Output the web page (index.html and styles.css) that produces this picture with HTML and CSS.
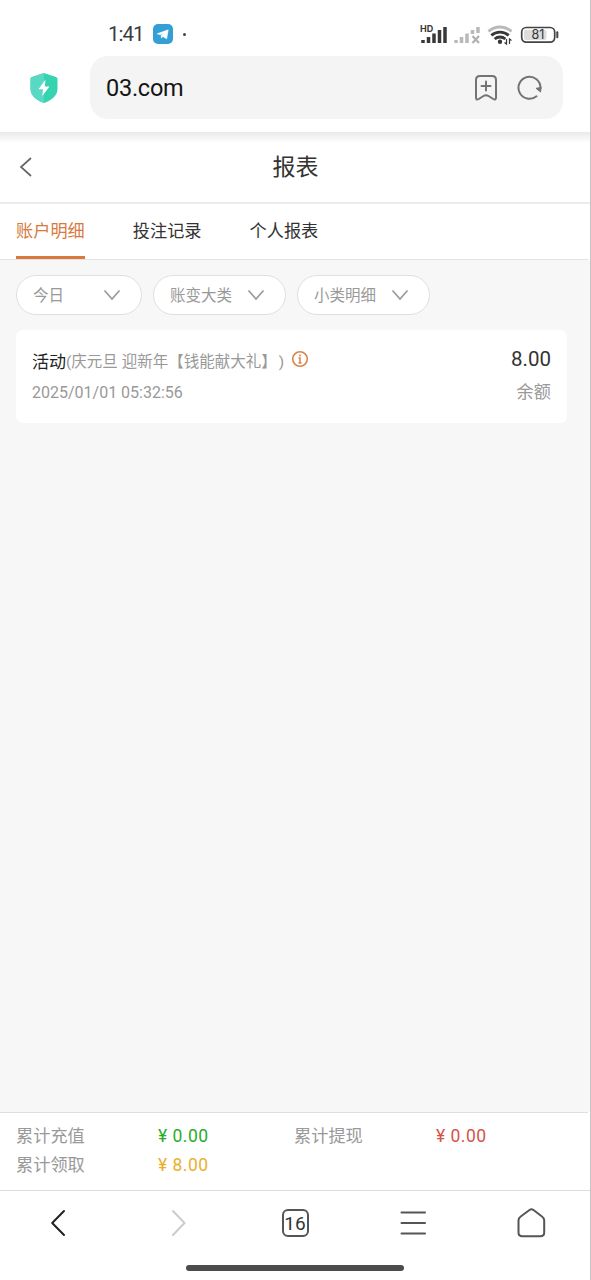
FILE: index.html
```html
<!DOCTYPE html>
<html lang="zh-CN">
<head>
<meta charset="utf-8">
<title>报表</title>
<link rel="stylesheet" href="styles.css">
</head>
<body>
<div class="screen">
  <header class="browser">
    <div class="status">
      <span class="clock">1:41</span>
      <svg class="telegram" width="20" height="20" viewBox="0 0 20 20"><rect width="20" height="20" rx="5" fill="#349fd5"/><path d="M4.200 9.800 15.200 5.800 13.700 14.800 9.900 12.600 8.400 14 8.300 11.200 12 8.200 7.400 10.700Z" fill="#fff" stroke="#fff" stroke-width=".6" stroke-linejoin="round"/></svg>
      <i class="dot"></i>
      <svg class="indicators" width="142" height="28" viewBox="0 0 142 28">
        <text x="2" y="13" class="hd">HD</text>
        <g stroke="#383838" stroke-width="3.500"><path d="M5 24v-3M10.500 24v-6M16 24v-9.500M21.500 24v-13M27 24V8"/></g>
        <g stroke="#b9b9b9" stroke-width="3.500"><path d="M38 24v-3M43.500 24v-6M49 24v-9.500M54.500 15v-4M60 14V8"/></g>
        <path d="M54.500 17l6.500 7M61 17l-6.500 7" stroke="#b0b0b0" stroke-width="2.200"/>
        <g fill="none" stroke-width="2.800"><path d="M70.500 12.500a17 17 0 0 1 23 0" stroke="#b9b9b9"/><path d="M73.300 16.400a13 13 0 0 1 17.400 0M76.600 20a8.300 8.300 0 0 1 10.800 0" stroke="#383838"/></g>
        <circle cx="82" cy="22.700" r="2.200" fill="#383838"/>
        <path d="M88.500 20v5l-2-1.500M91.500 25v-5l2 1.500" fill="none" stroke="#383838" stroke-width="1.200"/>
        <rect x="103.700" y="8.500" width="33" height="14.600" rx="4.500" fill="#fff" stroke="#444" stroke-width="1.700"/>
        <rect x="106" y="10.700" width="22.500" height="10.200" rx="2" fill="#ddd"/>
        <path d="M139.300 13.300v5" stroke="#444" stroke-width="2" stroke-linecap="round"/>
        <text x="120" y="20.300" class="charge">81</text>
      </svg>
    </div>
    <div class="address-row">
      <svg class="shield" width="28" height="32" viewBox="0 0 28 32"><path d="M14 1 26 5Q27.500 5.600 27.500 7V17C27.500 24 21 28.500 14 31 7 28.500.5 24 .5 17V7Q.5 5.600 2 5Z" fill="#36d3b0"/><path d="M14 1 2 5Q.5 5.600.5 7V17C.5 24 7 28.500 14 31Z" fill="#59d8c3"/><path d="M15.500 7.500 8.500 17.200H13L12.300 24 19.500 14.500H14.800Z" fill="#fff"/></svg>
      <div class="address">
        <span class="url">03.com</span>
        <svg class="bookmark" width="24" height="28" viewBox="0 0 24 28" fill="none" stroke="#737373" stroke-width="2" stroke-linecap="round" stroke-linejoin="round"><path d="M6 2H18Q22 2 22 6V23.500Q22 26.500 19.300 25L14.500 22Q12 20.500 9.500 22L4.700 25Q2 26.500 2 23.500V6Q2 2 6 2ZM12 7.500V16.500M7.500 12H16.500"/></svg>
        <svg width="26" height="26" viewBox="0 0 26 26"><path d="M19.500 21.300A11 11 0 1 1 23.500 13" fill="none" stroke="#737373" stroke-width="2" stroke-linecap="round"/><path d="M19 13.300 24.200 12.500 23.500 17Z" fill="#737373" stroke="#737373" stroke-linejoin="round"/></svg>
      </div>
    </div>
  </header>
  <div class="titlebar">
    <svg width="13" height="20" viewBox="0 0 13 20" fill="none" stroke="#666" stroke-width="1.700"><path d="M12 1 2 10l10 9"/></svg>
    <h1>报表</h1>
  </div>
  <nav class="tabs"><span class="tab active">账户明细</span><span class="tab">投注记录</span><span class="tab">个人报表</span></nav>
  <main class="content">
    <div class="filters">
      <div class="filter day">今日<svg class="chevron" viewBox="0 0 18 12"><path d="M1.500 1.500 9 10l7.500-8.500"/></svg></div>
      <div class="filter">账变大类<svg class="chevron" viewBox="0 0 18 12"><path d="M1.500 1.500 9 10l7.500-8.500"/></svg></div>
      <div class="filter">小类明细<svg class="chevron" viewBox="0 0 18 12"><path d="M1.500 1.500 9 10l7.500-8.500"/></svg></div>
    </div>
    <section class="card">
      <div class="line"><span class="kind">活动</span><span class="detail">(庆元旦 迎新年【钱能献大礼】<span class="paren">)</span></span><svg class="info" width="18" height="18" viewBox="0 0 18 18"><circle cx="9" cy="9" r="7.300" fill="none" stroke="#d9844a" stroke-width="1.600"/><path d="M9 4.500v2M7.500 8H9v5M7.500 13h3" fill="none" stroke="#d9844a" stroke-width="1.500"/></svg><span class="amount">8.00</span></div>
      <div class="line second"><span>2025/01/01 05:32:56</span><span class="balance">余额</span></div>
    </section>
  </main>
  <section class="totals">
    <span>累计充值</span><b class="green">¥ 0.00</b><span>累计提现</span><b class="red">¥ 0.00</b>
    <span>累计领取</span><b class="gold">¥ 8.00</b>
  </section>
  <footer class="toolbar">
    <div class="buttons">
      <svg viewBox="0 0 36 32" class="dark"><path d="M23 4 11.200 16 23 28"/></svg>
      <svg viewBox="0 0 36 32" class="pale"><path d="M14 4l11.500 12L14 28"/></svg>
      <span class="slot"><span class="count">16</span></span>
      <svg viewBox="0 0 36 32"><path d="M6.500 5.500h23.500M6.500 16h23.500M6.500 26.500h23.500"/></svg>
      <svg viewBox="0 0 36 32"><path d="M16.500 3Q18.500 1.700 20.500 3L29 9.500Q31.200 11 31.200 13.500V25.500Q31.200 29.300 27.400 29.300H9.300Q5.500 29.300 5.500 25.500V13.500Q5.500 11 7.700 9.500Z"/></svg>
    </div>
    <div class="home-bar"></div>
  </footer>
</div>
</body>
</html>
```
FILE: styles.css
```css
* { box-sizing: border-box; }
body { margin: 0; background: #fff; font-family: Roboto, "Noto Sans CJK SC", sans-serif; color: #333; text-spacing-trim: space-all; }
svg { display: block; flex: none; }
.screen { width: 591px; height: 1280px; display: flex; flex-direction: column; border-right: 1px solid #c4c4c4; overflow: hidden; white-space: nowrap; }
.browser { height: 132px; flex: none; }
.status { height: 56px; padding: 12px 30px 0 108px; display: flex; align-items: center; }
.clock { width: 45px; font-size: 20.5px; letter-spacing: -1px; color: #3c3c3c; }
.dot { width: 3px; height: 3px; border-radius: 50%; background: #444; margin-left: 10px; }
.indicators { margin: -3px 0 0 auto; }
.hd { font: 700 9px Inter, sans-serif; fill: #383838; }
.charge { font: 12.5px Inter, sans-serif; fill: #333; text-anchor: middle; }
.address-row { display: flex; align-items: center; padding-left: 30px; gap: 32px; }
.address { width: 473px; height: 63px; border-radius: 18px; background: #f4f4f4; display: flex; align-items: center; padding: 0 20px 0 16px; }
.url { font-size: 23.5px; color: #151515; letter-spacing: -.25px; }
.bookmark { margin: 0 19px 0 auto; }
.titlebar { height: 72px; flex: none; display: grid; grid-template-columns: 48px 1fr 48px; align-items: center; padding-left: 1px; border-bottom: 2px solid #ebebeb; background: linear-gradient(#e9e9e9, #fff 11px); }
.titlebar svg { margin-left: 18px; }
h1 { margin: 0; padding-top: 2px; text-align: center; font-size: 23px; font-weight: 400; line-height: 34px; }
.tabs { height: 56px; flex: none; margin-right: 2px; display: flex; gap: 48px; padding-left: 16px; border-bottom: 1px solid #e2e2e2; font-size: 17.2px; }
.tab { height: 55px; line-height: 55px; border-bottom: 3px solid transparent; }
.active { color: #d87a3e; border-color: #d87a3e; }
.content { height: 852px; flex: none; background: #f7f7f7; padding: 15px 23px 0 16px; }
.filters { display: flex; gap: 11px; }
.filter { width: 133px; height: 40px; display: flex; align-items: center; justify-content: space-between; padding: 0 20px 3px 16px; border: 1px solid #e0e0e0; border-radius: 20px; background: #fff; font-size: 15.5px; color: #999; }
.day { width: 126px; }
.chevron { width: 18px; height: 12px; margin-top: 2px; fill: none; stroke: #999; stroke-width: 1.7; }
.card { height: 93px; margin-top: 15px; border-radius: 7px; background: #fff; padding: 15px 16px; }
.line { height: 32px; display: flex; align-items: center; line-height: 30px; }
.kind { font-size: 17px; color: #222; padding-top: 2px; }
.detail { font-size: 15.5px; color: #999; padding-top: 1px; }
.paren { margin-left: 2px; }
.info { margin: -5px 0 0 7px; }
.amount { margin-left: auto; font-size: 20.5px; margin-top: -4px; }
.second { color: #999; font-size: 16px; }
.balance { margin-left: auto; font-size: 17.2px; margin-top: -3px; }
.totals { height: 78px; flex: none; border-top: 1px solid #dfdfdf; margin-right: 2px; display: grid; grid-template-columns: 142px 136px 142px 1fr; grid-auto-rows: 29px; align-items: center; padding: 8px 0 0 16px; font-size: 17.2px; color: #999; }
.totals span { margin-top: -3px; }
.totals b { font-weight: 400; font-size: 17.5px; letter-spacing: .5px; }
.totals .green { color: #28ad28; }
.totals .red { color: #d55449; }
.totals .gold { color: #e9b02d; }
.toolbar { height: 90px; flex: none; border-top: 1px solid #dedede; }
.buttons { height: 64px; display: flex; justify-content: space-between; align-items: center; padding: 0 41px; }
.buttons svg { width: 36px; height: 32px; fill: none; stroke: #555; stroke-width: 2; stroke-linecap: round; stroke-linejoin: round; }
.buttons .dark { stroke: #222; }
.buttons .pale { stroke: #ccc; }
.slot { width: 36px; display: flex; justify-content: center; }
.count { width: 27px; height: 28px; border: 2px solid #555; border-radius: 6px; font-size: 19px; line-height: 25px; text-align: center; }
.home-bar { width: 218px; height: 6px; margin: 10px auto 0; border-radius: 3px; background: #4c4c4c; }
```
